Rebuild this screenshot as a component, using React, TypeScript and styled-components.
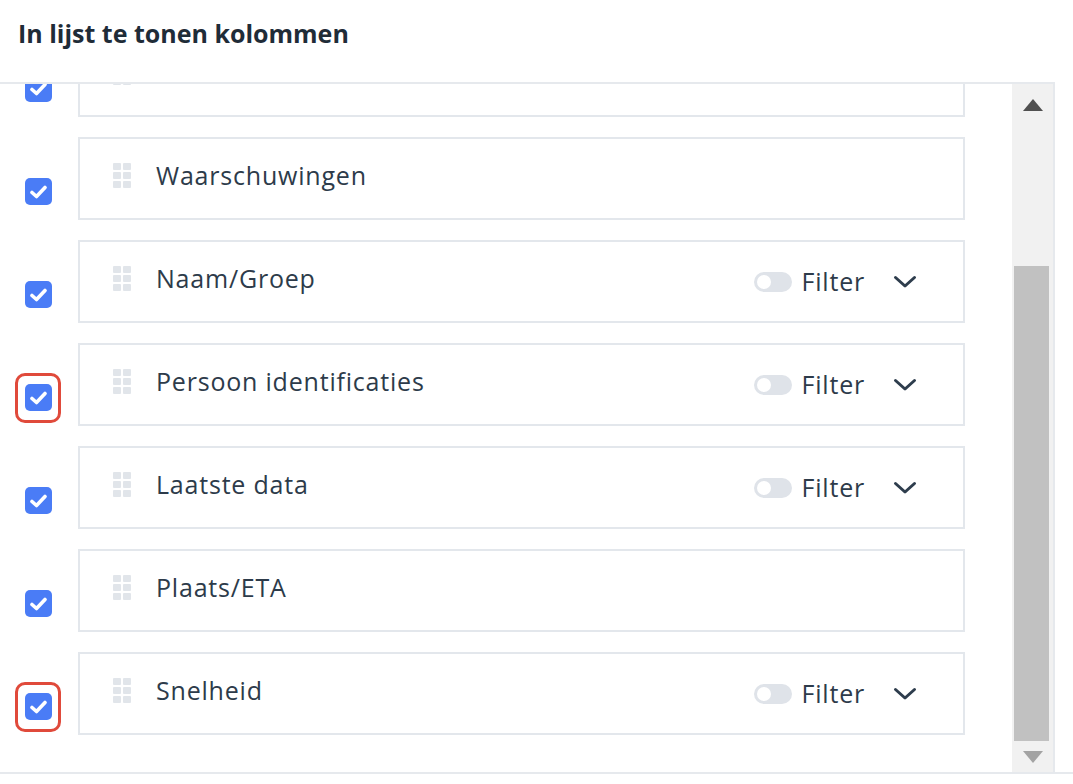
import { useLayoutEffect, useRef } from 'react';
import styled, { createGlobalStyle } from 'styled-components';

type Column = {
  id: string;
  label: string;
  filter?: boolean;
  highlighted?: boolean;
};

const columns: Column[] = [
  { id: 'kenmerk', label: 'Kenmerk' },
  { id: 'warn', label: 'Waarschuwingen' },
  { id: 'name', label: 'Naam/Groep', filter: true },
  { id: 'person', label: 'Persoon identificaties', filter: true, highlighted: true },
  { id: 'last', label: 'Laatste data', filter: true },
  { id: 'place', label: 'Plaats/ETA' },
  { id: 'speed', label: 'Snelheid', filter: true, highlighted: true },
];

const GlobalStyle = createGlobalStyle`
  html, body {
    margin: 0;
    padding: 0;
    background: #ffffff;
    font-family: "Open Sans", "Noto Sans", sans-serif;
  }
`;

const Page = styled.div`
  width: 1073px;
  height: 784px;
  display: flex;
  flex-direction: column;
  overflow: hidden;
`;

const Header = styled.header`
  height: 82px;
  box-sizing: border-box;
  padding: 17px 0 0 18px;
`;

const Title = styled.h2`
  margin: 0;
  font-size: 25px;
  line-height: 32px;
  font-weight: 700;
  color: #1f2c38;
`;

const Panel = styled.section`
  width: 1055px;
  height: 690px;
  box-sizing: border-box;
  display: flex;
  border-top: 2px solid #e6e9ed;
  border-right: 2px solid #e6e9ed;
`;

const List = styled.div`
  flex: 1;
  overflow-y: scroll;
  scrollbar-width: none;
  padding: 20px 47px 40px 25px;
  display: flex;
  flex-direction: column;
  gap: 20px;

  &::-webkit-scrollbar {
    display: none;
  }
`;

const Line = styled.div`
  display: flex;
  align-items: flex-start;
  gap: 26px;
  flex-shrink: 0;
`;

const CheckWrap = styled.div<{ $highlighted?: boolean }>`
  position: relative;
  margin-top: 41px;
  width: 27px;
  height: 27px;

  &::after {
    content: '';
    display: ${({ $highlighted }) => ($highlighted ? 'block' : 'none')};
    position: absolute;
    left: -10px;
    right: -9px;
    top: -11px;
    bottom: -12px;
    border: 3px solid #e04a3b;
    border-radius: 10px;
  }
`;

const CheckBox = styled.div`
  width: 27px;
  height: 27px;
  border-radius: 5px;
  background: #4a7cf6;
  display: flex;
  align-items: center;
  justify-content: center;
`;

const Card = styled.div`
  flex: 1;
  height: 83px;
  box-sizing: border-box;
  border: 2px solid #e3e7ec;
  display: flex;
  align-items: center;
  padding: 0 46px 0 33px;
`;

const Handle = styled.div`
  display: grid;
  grid-template-columns: repeat(2, 8px);
  grid-auto-rows: 7px;
  gap: 2px;
  margin-bottom: 6px;
  margin-right: 25px;

  span {
    background: #e1e5ea;
    border-radius: 1px;
  }
`;

const Label = styled.span`
  flex: 1;
  font-size: 25px;
  line-height: 34px;
  margin-bottom: 8px;
  color: #2d3b4a;
  letter-spacing: 0.8px;
`;

const FilterGroup = styled.div`
  display: flex;
  align-items: center;
`;

const Toggle = styled.div`
  width: 38px;
  height: 20px;
  border-radius: 10px;
  background: #dfe3e9;
  box-sizing: border-box;
  padding: 3px;
  margin-right: 10px;

  &::before {
    content: '';
    display: block;
    width: 14px;
    height: 14px;
    border-radius: 50%;
    background: #ffffff;
  }
`;

const FilterText = styled.span`
  font-size: 25px;
  line-height: 34px;
  letter-spacing: 0.8px;
  color: #2d3b4a;
  margin-right: 28px;
  margin-bottom: 2px;
`;

const Scrollbar = styled.div`
  width: 41px;
  background: #f1f1f1;
  display: flex;
  flex-direction: column;
`;

const ScrollButton = styled.div<{ $height: number }>`
  height: ${({ $height }) => $height}px;
  display: flex;
  align-items: center;
  justify-content: center;
`;

const Track = styled.div`
  flex: 1;
  padding: 140px 4px 0 2px;
`;

const Thumb = styled.div`
  height: 475px;
  background: #c1c1c1;
`;

const Footer = styled.footer`
  flex: 1;
  border-top: 2px solid #e6e9ed;
`;

const Check = () => (
  <svg width="17" height="14" viewBox="0 0 17 14">
    <path d="M2 7.5 L6.5 11.5 L15 2.5" fill="none" stroke="#ffffff" strokeWidth="3.6" strokeLinecap="round" strokeLinejoin="round" />
  </svg>
);

const Chevron = () => (
  <svg width="24" height="14" viewBox="0 0 24 14">
    <path d="M2.5 2.5 L12 11 L21.5 2.5" fill="none" stroke="#2e3d4d" strokeWidth="3" strokeLinecap="round" strokeLinejoin="round" />
  </svg>
);

const Arrow = ({ up, color }: { up?: boolean; color: string }) => (
  <svg width="20" height="12" viewBox="0 0 20 12">
    <polygon points={up ? '10,0 20,12 0,12' : '0,0 20,0 10,12'} fill={color} />
  </svg>
);

const App = () => {
  const listRef = useRef<HTMLDivElement>(null);

  useLayoutEffect(() => {
    if (listRef.current) listRef.current.scrollTop = 70;
  }, []);

  return (
    <Page>
      <GlobalStyle />
      <Header>
        <Title>In lijst te tonen kolommen</Title>
      </Header>
      <Panel>
        <List ref={listRef}>
          {columns.map((c) => (
            <Line key={c.id}>
              <CheckWrap $highlighted={c.highlighted}>
                <CheckBox>
                  <Check />
                </CheckBox>
              </CheckWrap>
              <Card>
                <Handle>
                  {Array.from({ length: 6 }).map((_, i) => <span key={i} />)}
                </Handle>
                <Label>{c.label}</Label>
                {c.filter && (
                  <FilterGroup>
                    <Toggle />
                    <FilterText>Filter</FilterText>
                    <Chevron />
                  </FilterGroup>
                )}
              </Card>
            </Line>
          ))}
        </List>
        <Scrollbar>
          <ScrollButton $height={42}>
            <Arrow up color="#505050" />
          </ScrollButton>
          <Track>
            <Thumb />
          </Track>
          <ScrollButton $height={30}>
            <Arrow color="#a3a3a3" />
          </ScrollButton>
        </Scrollbar>
      </Panel>
      <Footer />
    </Page>
  );
};

export default App;
